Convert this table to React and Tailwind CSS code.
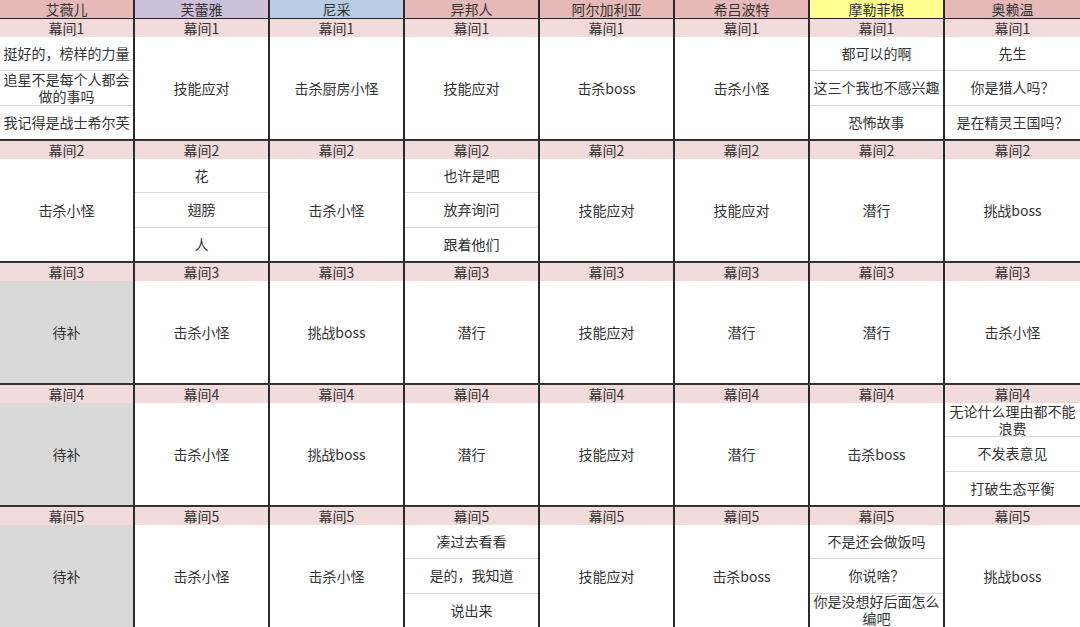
import React from "react";

const headers = [
  { name: "艾薇儿", bg: "bg-[#e6b8b7]" },
  { name: "芙蕾雅", bg: "bg-[#ccc0da]" },
  { name: "尼采", bg: "bg-[#b8cce4]" },
  { name: "异邦人", bg: "bg-[#e6b8b7]" },
  { name: "阿尔加利亚", bg: "bg-[#e6b8b7]" },
  { name: "希吕波特", bg: "bg-[#e6b8b7]" },
  { name: "摩勒菲根", bg: "bg-[#ffff8f]" },
  { name: "奥赖温", bg: "bg-[#e6b8b7]" },
];

const G = { gray: true, text: "待补" };

const sections = [
  [
    ["挺好的，榜样的力量", "追星不是每个人都会做的事吗", "我记得是战士希尔芙"],
    "技能应对",
    "击杀厨房小怪",
    "技能应对",
    "击杀boss",
    "击杀小怪",
    ["都可以的啊", "这三个我也不感兴趣", "恐怖故事"],
    ["先生", "你是猎人吗？", "是在精灵王国吗？"],
  ],
  [
    "击杀小怪",
    ["花", "翅膀", "人"],
    "击杀小怪",
    ["也许是吧", "放弃询问", "跟着他们"],
    "技能应对",
    "技能应对",
    "潜行",
    "挑战boss",
  ],
  [G, "击杀小怪", "挑战boss", "潜行", "技能应对", "潜行", "潜行", "击杀小怪"],
  [
    G,
    "击杀小怪",
    "挑战boss",
    "潜行",
    "技能应对",
    "潜行",
    "击杀boss",
    ["无论什么理由都不能浪费", "不发表意见", "打破生态平衡"],
  ],
  [
    G,
    "击杀小怪",
    "击杀小怪",
    ["凑过去看看", "是的，我知道", "说出来"],
    "技能应对",
    "击杀boss",
    ["不是还会做饭吗", "你说啥？", "你是没想好后面怎么编吧"],
    "挑战boss",
  ],
];

function Content({ item }) {
  if (Array.isArray(item)) {
    return (
      <div className="flex-1 flex flex-col bg-white min-h-0">
        {item.map((t, i) => (
          <div
            key={i}
            className={
              "flex-1 min-h-0 overflow-hidden flex items-center justify-center text-center leading-[17px] px-px " +
              (i > 0 ? "border-t border-[#d9d9d9]" : "")
            }
          >
            <span>{t}</span>
          </div>
        ))}
      </div>
    );
  }
  if (item && item.gray) {
    return (
      <div className="flex-1 flex items-center justify-center bg-[#d9d9d9]">
        {item.text}
      </div>
    );
  }
  return (
    <div className="flex-1 flex items-center justify-center bg-white">{item}</div>
  );
}

export default function App() {
  return (
    <div
      className="w-[1080px] h-[627px] flex flex-col bg-white text-[14px] text-[#333]"
      style={{ fontFamily: '"Noto Sans CJK SC", "Noto Sans", sans-serif' }}
    >
      <div className="grid grid-cols-8 h-[19px] border-b border-[#222] shrink-0">
        {headers.map((h, i) => (
          <div
            key={i}
            className={
              "flex items-center justify-center leading-[18px] " +
              h.bg +
              (i < 7 ? " border-r-2 border-[#2a2a2a]" : "")
            }
          >
            {h.name}
          </div>
        ))}
      </div>
      {sections.map((row, si) => (
        <div
          key={si}
          className={
            "grid grid-cols-8 flex-1 min-h-0 " +
            (si > 0 ? "border-t-2 border-[#333]" : "")
          }
        >
          {row.map((item, ci) => (
            <div
              key={ci}
              className={
                "flex flex-col min-h-0 " +
                (ci < 7 ? "border-r-2 border-[#2a2a2a]" : "")
              }
            >
              <div className="h-[18px] shrink-0 bg-[#f2dcdb] flex items-center justify-center leading-[18px]">
                幕间{si + 1}
              </div>
              <Content item={item} />
            </div>
          ))}
        </div>
      ))}
    </div>
  );
}
